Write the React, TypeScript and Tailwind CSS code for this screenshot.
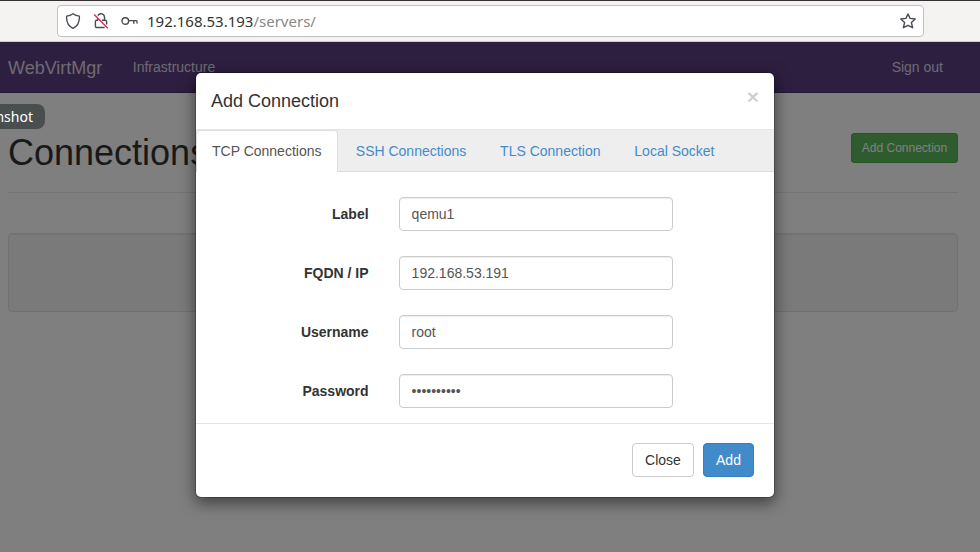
const sans = 'font-["Liberation_Sans",Arial,sans-serif]';
const ubuntu = 'font-["Noto_Sans","Open_Sans",sans-serif]';

function ShieldIcon() {
  return (
    <svg width="16" height="16" viewBox="0 0 16 16" fill="none" stroke="#4a4a50" strokeWidth="1.3" strokeLinejoin="round">
      <path d="M8 .7C9.7 2 11.8 2.9 14.4 3.2 14.7 8.6 13 13 8 15.3 3 13 1.3 8.6 1.6 3.2 4.2 2.9 6.3 2 8 .7Z" />
    </svg>
  );
}

function LockIcon() {
  return (
    <svg width="16" height="16" viewBox="0 0 16 16" fill="none" stroke="#4a4a50" strokeWidth="1.4">
      <path d="M4.9 2.6A3.5 3.5 0 0 1 11.5 4.2V7.2M4.6 5.4V7M5.2 7.3H3.6a1.2 1.2 0 0 0-1.2 1.2v4.8a1.2 1.2 0 0 0 1.2 1.2H11.6M9 7.3H12.4a1.2 1.2 0 0 1 1.2 1.2V11.6" />
      <path d="M1.2 1.4 14.8 15.2" stroke="#e22850" strokeWidth="1.4" />
    </svg>
  );
}

function KeyIcon() {
  return (
    <svg width="17" height="16" viewBox="0 0 17 16" fill="none" stroke="#4a4a50" strokeWidth="1.4">
      <circle cx="4.3" cy="8" r="3.3" />
      <path d="M7.6 7.6H15.2a.8.8 0 0 1 .8.8V10.6M12.8 8v2.8" />
    </svg>
  );
}

function StarIcon() {
  return (
    <svg width="16" height="16" viewBox="0 0 16 16" fill="none" stroke="#4a4a50" strokeWidth="1.4" strokeLinejoin="round">
      <path d="M8 1 10.1 5.4 15.2 6 11.4 9.6 12.6 14.7 8 12.3 3.4 14.7 4.6 9.6.8 6 5.9 5.4Z" />
    </svg>
  );
}

const fields = [
  { label: "Label", value: "qemu1", type: "text" },
  { label: "FQDN / IP", value: "192.168.53.191", type: "text" },
  { label: "Username", value: "root", type: "text" },
  { label: "Password", value: "passphrase", type: "password" },
];

function Modal() {
  return (
    <div className="absolute top-[30px] left-[195px] w-[580px] rounded-md border border-black/20 bg-white bg-clip-padding shadow-[0_5px_15px_rgba(0,0,0,0.5)]">
      <div className="flex h-[57px] items-start justify-between border-b border-[#e5e5e5] px-[15px] pt-[18px]">
        <h4 className="text-[18px] leading-5">Add Connection</h4>
        <button className="-mt-[5px] text-[21px] leading-[21px] font-bold text-black/20">×</button>
      </div>
      <div className="flex h-[42px] border-b border-[#ddd] bg-[#eee] text-[#428bca]">
        <div className="h-[42px] w-[142px] rounded-t border border-b-0 border-[#ddd] bg-white pt-[10px] pl-[15px] leading-5 text-[#555]">TCP Connections</div>
        <div className="pt-[11px] pl-[17.8px] leading-5">SSH Connections</div>
        <div className="pt-[11px] pl-[33.8px] leading-5">TLS Connection</div>
        <div className="pt-[11px] pl-[33.8px] leading-5">Local Socket</div>
      </div>
      <div className="flex h-[251px] flex-col gap-[25px] pt-[25px]">
        {fields.map((f) => (
          <label key={f.label} className="flex h-[34px] items-center">
            <span className="w-[172.6px] text-right font-bold">{f.label}</span>
            <input
              type={f.type}
              defaultValue={f.value}
              className="ml-[30px] h-[34px] w-[274px] rounded border border-[#ccc] bg-white px-3 text-[#555] shadow-[inset_0_1px_1px_rgba(0,0,0,0.075)]"
            />
          </label>
        ))}
      </div>
      <div className="flex h-[74px] items-start justify-end gap-[9px] border-t border-[#e5e5e5] pt-[19px] pr-[20px]">
        <button className="h-[34px] w-[62px] rounded border border-[#ccc] bg-white">Close</button>
        <button className="h-[34px] w-[51px] rounded border border-[#357ebd] bg-[#428bca] text-white">Add</button>
      </div>
    </div>
  );
}

export default function App() {
  return (
    <div className={`h-[552px] w-[980px] overflow-hidden bg-white text-[14px] leading-5 text-[#333] ${sans}`}>
      <div className="flex h-[42px] border-t border-b border-t-[#353133] border-b-[#cfcdcb] bg-[#f4f3f2] pt-1 pl-[57px]">
        <div className="flex h-[32px] w-[867px] items-center rounded border border-[#c3c1c0] bg-white px-[7px]">
          <ShieldIcon />
          <span className="ml-3"><LockIcon /></span>
          <span className="ml-3"><KeyIcon /></span>
          <span className={`ml-[9px] text-[15px] text-[#333] ${ubuntu}`}>
            192.168.53.193<span className="text-[#888]">/servers/</span>
          </span>
          <span className="ml-auto"><StarIcon /></span>
        </div>
      </div>
      <div className="relative h-[510px]">
        <nav className="flex h-[51px] items-center border-b border-[#463265] bg-[#5a3f80] pr-[37px] pl-2 text-[#dad6e0]">
          <span className="pt-[2px] text-[18px]">WebVirtMgr</span>
          <span className="ml-[30.4px]">Infrastructure</span>
          <span className="ml-auto">Sign out</span>
        </nav>
        <main className="pr-[22px] pl-2">
          <div className="flex h-[100px] items-start justify-between border-b border-[#e8e8e8] pt-10">
            <h1 className="text-[36px] leading-[40px]">Connections</h1>
            <button className="h-[30px] w-[107px] rounded-[3px] border border-[#4cae4c] bg-[#5cb85c] text-[12px] text-white">Add Connection</button>
          </div>
          <div className="mt-10 h-[79px] rounded border border-[#e3e3e3] bg-[#f5f5f5] shadow-[inset_0_1px_1px_rgba(0,0,0,0.05)]" />
        </main>
        <div className="absolute inset-0 bg-black/50" />
        <div className={`absolute top-[62px] left-0 flex h-[25px] w-[45px] items-center justify-end rounded-r-lg bg-[#494f4f] pr-[12px] text-[14px] text-white ${ubuntu}`}>nshot</div>
        <Modal />
      </div>
    </div>
  );
}
